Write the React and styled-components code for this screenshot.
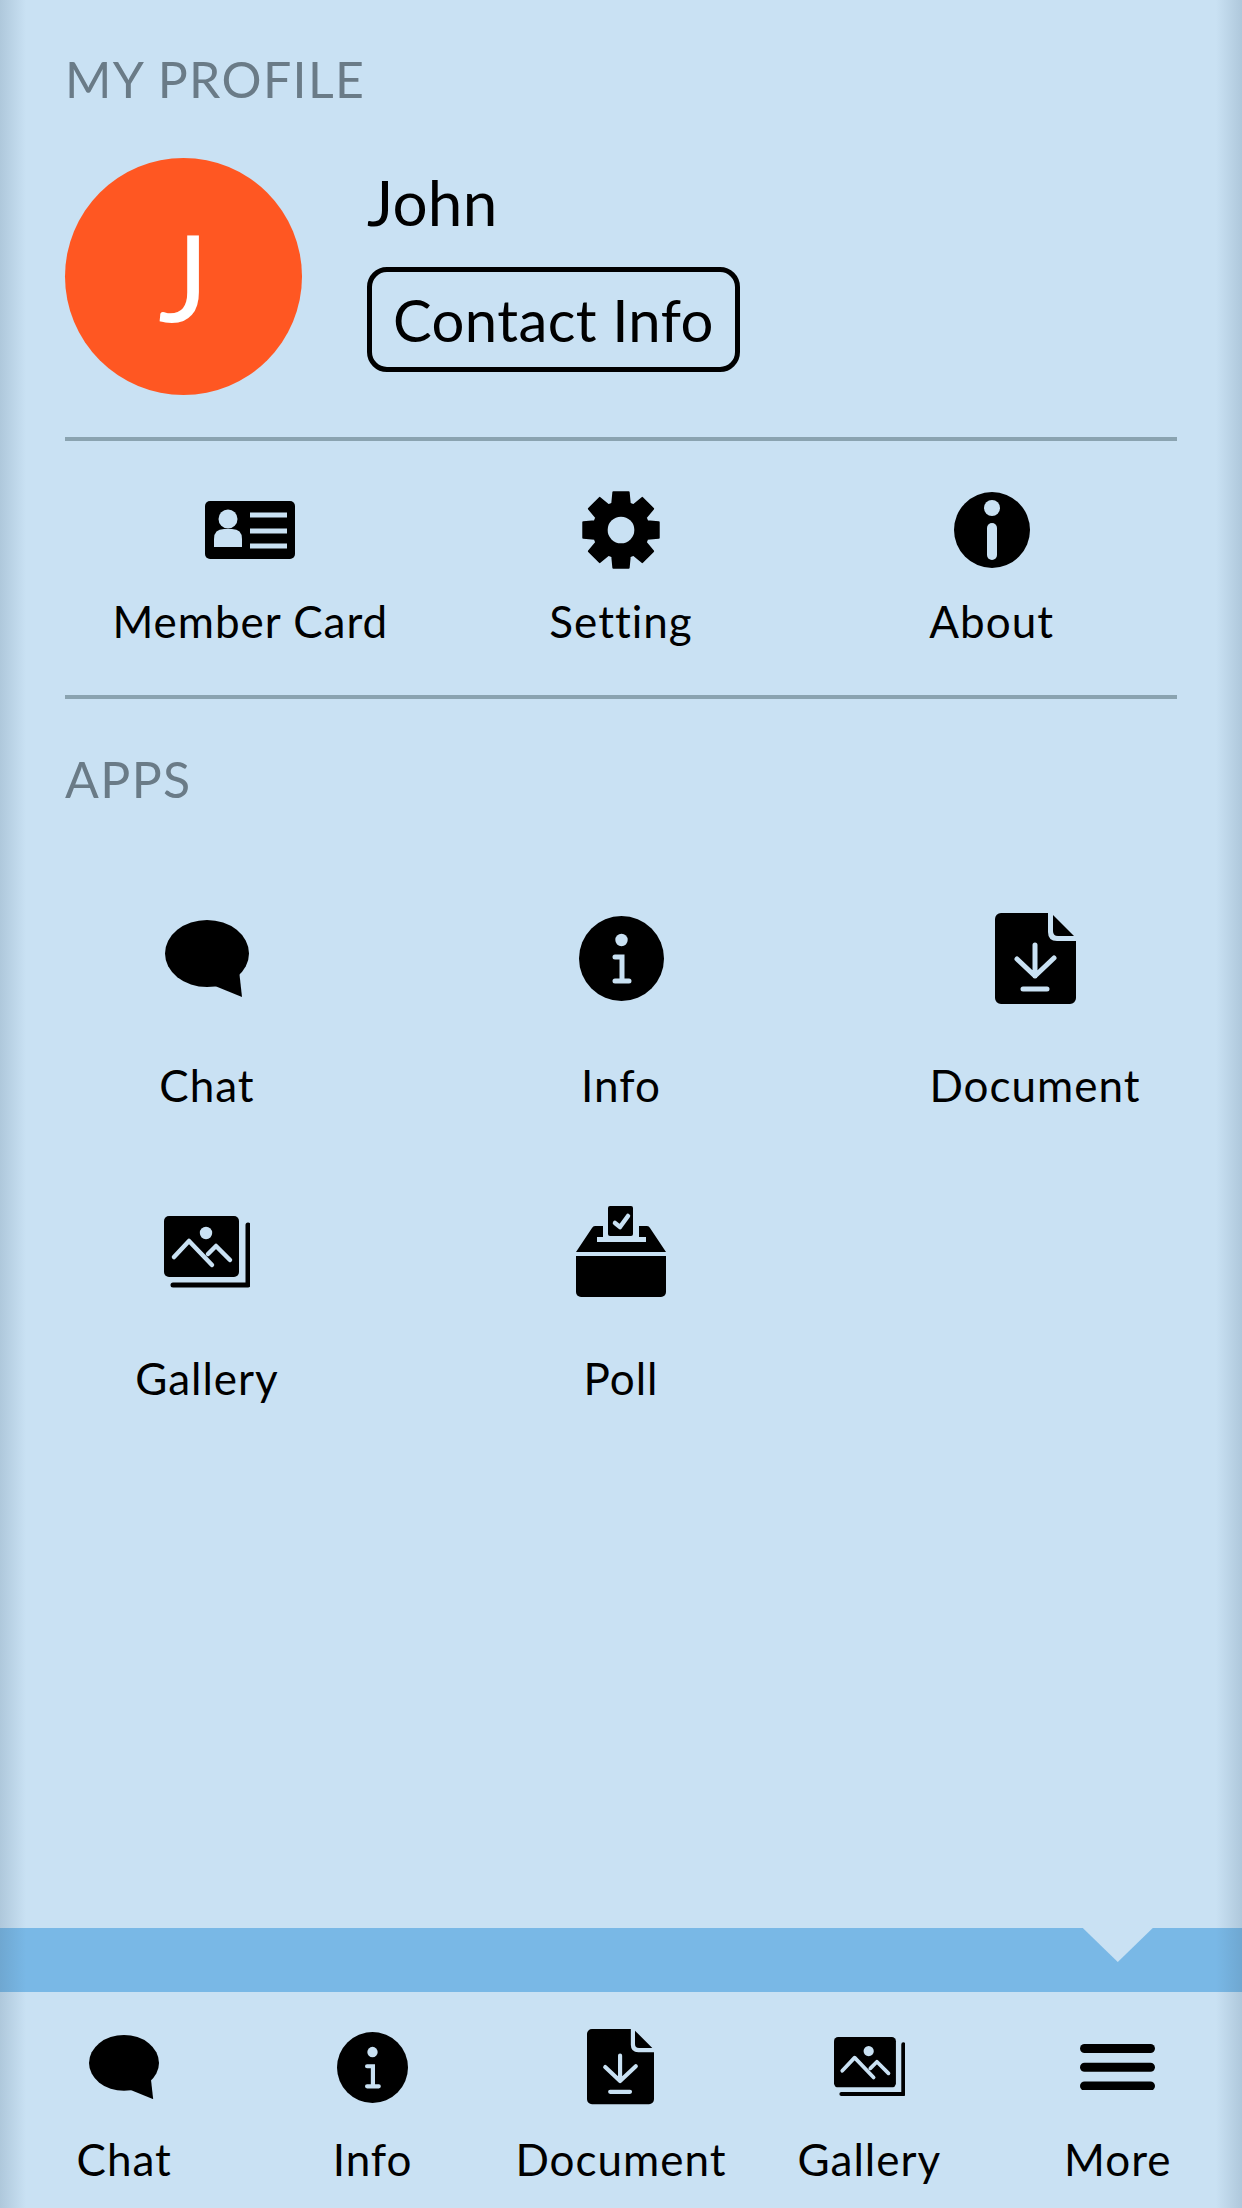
import styled, { createGlobalStyle } from "styled-components";

const PAGE = "#c9e1f3";
const EDGE = "linear-gradient(90deg, rgba(70,100,125,0.2), transparent 26px, transparent calc(100% - 26px), rgba(70,100,125,0.2))";

const Global = createGlobalStyle`
  * { box-sizing: border-box; }
  body {
    margin: 0;
    font-family: Lato, "Open Sans", sans-serif;
    color: #000;
  }
`;

function gearPath() {
  const pts = [];
  const cx = 39;
  const cy = 39;
  for (let i = 0; i < 8; i++) {
    const a = (i * Math.PI) / 4 - Math.PI / 2;
    const at = (r, off) => {
      const t = a + off;
      return `${(cx + r * Math.cos(t)).toFixed(2)} ${(cy + r * Math.sin(t)).toFixed(2)}`;
    };
    pts.push(at(27, -0.32), at(37.5, -0.2), at(37.5, 0.2), at(27, 0.32));
  }
  return `M${pts.join(" L")} Z`;
}

const ChatIcon = ({ w }) => (
  <svg width={w} viewBox="0 0 84 77">
    <ellipse cx="42" cy="33.5" rx="42" ry="33.5" />
    <path d="M50 66 L77 77 L74 50 Z" />
  </svg>
);

const InfoIcon = ({ w }) => (
  <svg width={w} viewBox="0 0 85 85">
    <circle cx="42.5" cy="42.5" r="42.5" />
    <circle cx="42.5" cy="24" r="6.2" fill={PAGE} />
    <path d="M36 41 H43 V65 M36 65 H50" fill="none" stroke={PAGE} strokeWidth="5" strokeLinecap="round" />
  </svg>
);

const DocumentIcon = ({ w }) => (
  <svg width={w} viewBox="0 0 81 91">
    <path d="M6 0 H53 V19 Q53 28 62 28 H81 V85 A6 6 0 0 1 75 91 H6 A6 6 0 0 1 0 85 V6 A6 6 0 0 1 6 0 Z" />
    <path d="M58 2 L79 23 H63 Q58 23 58 18 Z" />
    <path d="M40 32 V63 M22 46 L40 63 L59 45 M28 76 H52" fill="none" stroke={PAGE} strokeWidth="5" strokeLinecap="round" strokeLinejoin="round" />
  </svg>
);

const GalleryIcon = ({ w }) => (
  <svg width={w} viewBox="0 0 86 72">
    <rect width="75" height="61" rx="5" />
    <path d="M9 69 H84 V9" fill="none" stroke="#000" strokeWidth="5" strokeLinecap="round" strokeLinejoin="round" />
    <circle cx="42" cy="17" r="6.2" fill={PAGE} />
    <path d="M10 41 L25 25 L48 49 M44 38 L52 30 L66 44" fill="none" stroke={PAGE} strokeWidth="4.5" strokeLinecap="round" strokeLinejoin="round" />
  </svg>
);

const PollIcon = ({ w }) => (
  <svg width={w} viewBox="0 0 90 91">
    <path d="M19 20 H71 Q73 20 74 22 L90 46 H0 L16 22 Q17 20 19 20 Z" />
    <path d="M27 16 H63 V31 H70 V36 H21 V31 H27 Z" fill={PAGE} />
    <rect x="32" width="25" height="30" rx="2" />
    <path d="M39 17 L44 21 L52 10" fill="none" stroke={PAGE} strokeWidth="4.5" strokeLinecap="round" strokeLinejoin="round" />
    <path d="M0 50 H90 V86 A5 5 0 0 1 85 91 H5 A5 5 0 0 1 0 86 Z" />
  </svg>
);

const CardIcon = ({ w }) => (
  <svg width={w} viewBox="0 0 90 58">
    <rect width="90" height="58" rx="5" />
    <circle cx="23" cy="18" r="9.5" fill={PAGE} />
    <path d="M9 46 V38 Q9 28 19 28 H27 Q37 28 37 38 V46 Z" fill={PAGE} />
    <path d="M45 14 H82 M45 30 H82 M45 45 H82" stroke={PAGE} strokeWidth="5" />
  </svg>
);

const GearIcon = ({ w }) => (
  <svg width={w} viewBox="0 0 78 78">
    <path d={gearPath()} stroke="#000" strokeWidth="2" strokeLinejoin="round" />
    <circle cx="39" cy="39" r="13" fill={PAGE} />
  </svg>
);

const AboutIcon = ({ w }) => (
  <svg width={w} viewBox="0 0 76 76">
    <circle cx="38" cy="38" r="38" />
    <circle cx="38" cy="16" r="8" fill={PAGE} />
    <path d="M38 36 V63" stroke={PAGE} strokeWidth="10" strokeLinecap="round" />
  </svg>
);

const MenuIcon = ({ w }) => (
  <svg width={w} viewBox="0 0 74 46">
    <rect width="74" height="9" rx="4.5" />
    <rect y="18.5" width="74" height="9" rx="4.5" />
    <rect y="37" width="74" height="9" rx="4.5" />
  </svg>
);

const shortcuts = [
  { label: "Member Card", Icon: CardIcon, w: 90 },
  { label: "Setting", Icon: GearIcon, w: 80 },
  { label: "About", Icon: AboutIcon, w: 76 },
];

const apps = [
  { label: "Chat", Icon: ChatIcon, w: 84 },
  { label: "Info", Icon: InfoIcon, w: 85 },
  { label: "Document", Icon: DocumentIcon, w: 81 },
  { label: "Gallery", Icon: GalleryIcon, w: 86 },
  { label: "Poll", Icon: PollIcon, w: 90 },
];

const tabs = [
  { label: "Chat", Icon: ChatIcon, w: 70 },
  { label: "Info", Icon: InfoIcon, w: 71 },
  { label: "Document", Icon: DocumentIcon, w: 67 },
  { label: "Gallery", Icon: GalleryIcon, w: 71 },
  { label: "More", Icon: MenuIcon, w: 75 },
];

export default function App() {
  return (
    <Page>
      <Global />
      <Content>
        <Title>MY PROFILE</Title>
        <Profile>
          <Avatar>J</Avatar>
          <ProfileText>
            <Name>John</Name>
            <ContactButton>Contact Info</ContactButton>
          </ProfileText>
        </Profile>
        <Shortcuts>
          {shortcuts.map(({ label, Icon, w }) => (
            <Shortcut key={label}>
              <ShortcutIcon>
                <Icon w={w} />
              </ShortcutIcon>
              <Label>{label}</Label>
            </Shortcut>
          ))}
        </Shortcuts>
        <Title>APPS</Title>
      </Content>
      <AppGrid>
        {apps.map(({ label, Icon, w }) => (
          <AppTile key={label}>
            <AppIcon>
              <Icon w={w} />
            </AppIcon>
            <Label>{label}</Label>
          </AppTile>
        ))}
      </AppGrid>
      <Bar>
        <Notch />
      </Bar>
      <TabBar>
        {tabs.map(({ label, Icon, w }) => (
          <Tab key={label}>
            <TabIcon>
              <Icon w={w} />
            </TabIcon>
            <Label>{label}</Label>
          </Tab>
        ))}
      </TabBar>
    </Page>
  );
}

const Page = styled.div`
  width: 100%;
  min-height: 2208px;
  display: flex;
  flex-direction: column;
  background: ${EDGE}, ${PAGE};

  svg {
    display: block;
    height: auto;
  }
`;

const Content = styled.div`
  padding: 49px 65px 0;
`;

const Title = styled.h2`
  margin: 0;
  font-size: 50px;
  font-weight: 400;
  line-height: 60px;
  letter-spacing: 1.4px;
  color: #6a7b87;
`;

const Profile = styled.div`
  display: flex;
  align-items: center;
  gap: 65px;
  margin-top: 49px;
  padding-bottom: 42px;
  border-bottom: 4px solid #8aa3b0;
`;

const Avatar = styled.div`
  width: 237px;
  height: 237px;
  border-radius: 50%;
  background: #ff5722;
  color: #fff;
  font-size: 120px;
  line-height: 237px;
  text-align: center;
`;

const ProfileText = styled.div`
  display: flex;
  flex-direction: column;
  align-items: flex-start;
  gap: 29px;
  margin-bottom: 16px;
`;

const Name = styled.div`
  font-size: 62px;
  line-height: 72px;
  letter-spacing: 0.3px;
`;

const ContactButton = styled.button`
  height: 105px;
  padding: 0 21px;
  border: 5px solid #000;
  border-radius: 20px;
  background: transparent;
  color: #000;
  font-family: inherit;
  font-size: 58px;
  letter-spacing: 0.4px;
`;

const Shortcuts = styled.div`
  display: grid;
  grid-template-columns: repeat(3, 1fr);
  height: 258px;
  margin-bottom: 50px;
  border-bottom: 4px solid #8aa3b0;
`;

const Shortcut = styled.div`
  display: flex;
  flex-direction: column;
  align-items: center;
`;

const ShortcutIcon = styled.div`
  height: 78px;
  margin-top: 50px;
  margin-bottom: 25px;
  display: flex;
  align-items: center;
`;

const Label = styled.div`
  font-size: 44px;
  line-height: 54px;
  letter-spacing: 1px;
  white-space: nowrap;
`;

const AppGrid = styled.div`
  flex: 1;
  display: grid;
  grid-template-columns: repeat(3, 1fr);
  grid-auto-rows: 293px;
  align-content: start;
  padding-top: 104px;
`;

const AppTile = styled.div`
  display: flex;
  flex-direction: column;
  align-items: center;

  ${Label} {
    margin-top: 54px;
  }
`;

const AppIcon = styled.div`
  height: 91px;
  display: flex;
  align-items: center;
`;

const Bar = styled.div`
  height: 64px;
  display: grid;
  grid-template-columns: repeat(5, 1fr);
  background: ${EDGE}, #79b8e6;
`;

const Notch = styled.div`
  grid-column: 5;
  justify-self: center;
  width: 70px;
  height: 34px;
  background: ${PAGE};
  clip-path: polygon(0 0, 100% 0, 50% 100%);
`;

const TabBar = styled.div`
  height: 216px;
  display: grid;
  grid-template-columns: repeat(5, 1fr);
`;

const Tab = styled.div`
  display: flex;
  flex-direction: column;
  align-items: center;
  padding-top: 37px;
`;

const TabIcon = styled.div`
  height: 76px;
  margin-bottom: 27px;
  display: flex;
  align-items: center;
`;
